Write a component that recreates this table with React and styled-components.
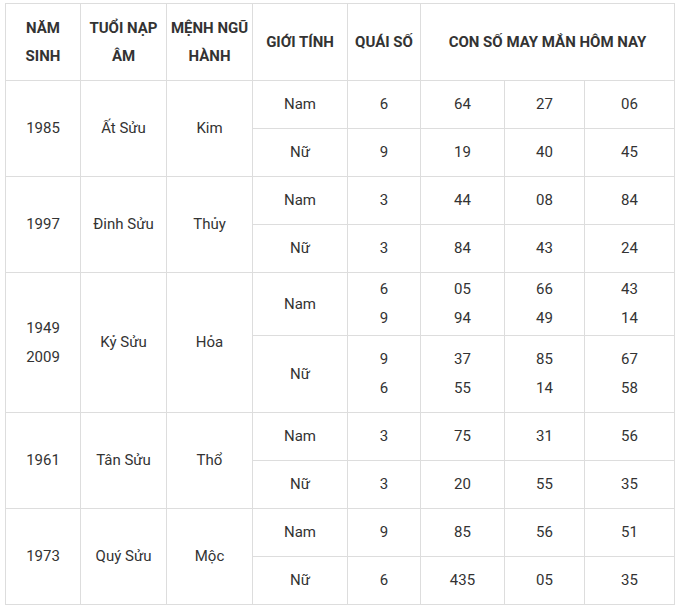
import React from 'react'
import styled, { createGlobalStyle } from 'styled-components'

const GlobalStyle = createGlobalStyle`
  html, body {
    margin: 0;
    padding: 0;
    background: #fff;
  }
  body {
    font-family: Roboto, "Noto Sans", Arial, sans-serif;
    color: #333;
  }
`

const Page = styled.div`
  padding: 3px 0 0 5px;
`

const Table = styled.table`
  border-collapse: collapse;
  table-layout: fixed;
  width: 669px;
  font-size: 15px;

  td, th {
    border: 1px solid #ddd;
    text-align: center;
    vertical-align: middle;
    padding: 0;
  }
`

const HeadCell = styled.th`
  font-weight: 700;
  line-height: 28px;
  color: #333;
  white-space: nowrap;
`

const Cell = styled.td`
  font-weight: 400;
  line-height: 29px;
`

const Row = styled.tr`
  height: ${p => p.$h}px;
`

const widths = [75, 86, 86, 95, 73, 84, 80, 90]

const data = [
  {
    year: ['1985'], tuoi: 'Ất Sửu', menh: 'Kim',
    rows: [
      { g: 'Nam', q: ['6'], n: [['64'], ['27'], ['06']], h: 48 },
      { g: 'Nữ', q: ['9'], n: [['19'], ['40'], ['45']], h: 48 },
    ],
  },
  {
    year: ['1997'], tuoi: 'Đinh Sửu', menh: 'Thủy',
    rows: [
      { g: 'Nam', q: ['3'], n: [['44'], ['08'], ['84']], h: 48 },
      { g: 'Nữ', q: ['3'], n: [['84'], ['43'], ['24']], h: 48 },
    ],
  },
  {
    year: ['1949', '2009'], tuoi: 'Kỷ Sửu', menh: 'Hỏa',
    rows: [
      { g: 'Nam', q: ['6', '9'], n: [['05', '94'], ['66', '49'], ['43', '14']], h: 63 },
      { g: 'Nữ', q: ['9', '6'], n: [['37', '55'], ['85', '14'], ['67', '58']], h: 77 },
    ],
  },
  {
    year: ['1961'], tuoi: 'Tân Sửu', menh: 'Thổ',
    rows: [
      { g: 'Nam', q: ['3'], n: [['75'], ['31'], ['56']], h: 48 },
      { g: 'Nữ', q: ['3'], n: [['20'], ['55'], ['35']], h: 48 },
    ],
  },
  {
    year: ['1973'], tuoi: 'Quý Sửu', menh: 'Mộc',
    rows: [
      { g: 'Nam', q: ['9'], n: [['85'], ['56'], ['51']], h: 48 },
      { g: 'Nữ', q: ['6'], n: [['435'], ['05'], ['35']], h: 48 },
    ],
  },
]

const Lines = ({ items }) =>
  items.map((t, i) => (
    <React.Fragment key={i}>
      {i > 0 && <br />}
      {t}
    </React.Fragment>
  ))

export default function App() {
  return (
    <Page>
      <GlobalStyle />
      <Table>
        <colgroup>
          {widths.map((w, i) => <col key={i} style={{ width: w }} />)}
        </colgroup>
        <thead>
          <Row $h={77}>
            <HeadCell>NĂM<br />SINH</HeadCell>
            <HeadCell>TUỔI NẠP<br />ÂM</HeadCell>
            <HeadCell>MỆNH NGŨ<br />HÀNH</HeadCell>
            <HeadCell>GIỚI TÍNH</HeadCell>
            <HeadCell>QUÁI SỐ</HeadCell>
            <HeadCell colSpan={3}>CON SỐ MAY MẮN HÔM NAY</HeadCell>
          </Row>
        </thead>
        <tbody>
          {data.map((d, di) =>
            d.rows.map((r, ri) => (
              <Row key={`${di}-${ri}`} $h={r.h}>
                {ri === 0 && (
                  <>
                    <Cell rowSpan={2}><Lines items={d.year} /></Cell>
                    <Cell rowSpan={2}>{d.tuoi}</Cell>
                    <Cell rowSpan={2}>{d.menh}</Cell>
                  </>
                )}
                <Cell>{r.g}</Cell>
                <Cell><Lines items={r.q} /></Cell>
                {r.n.map((n, ni) => <Cell key={ni}><Lines items={n} /></Cell>)}
              </Row>
            ))
          )}
        </tbody>
      </Table>
    </Page>
  )
}
